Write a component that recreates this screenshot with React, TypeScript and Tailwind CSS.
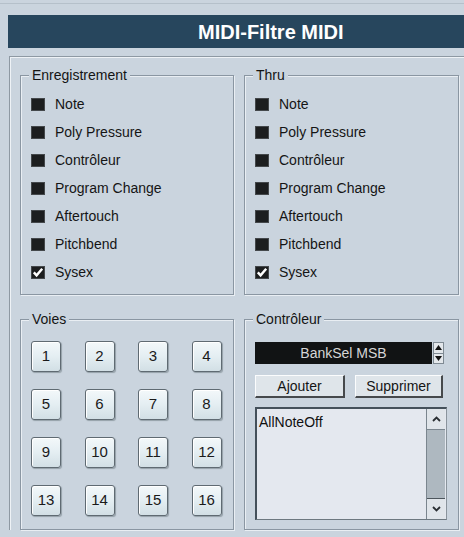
import React from "react";

const FONT = "font-['Liberation_Sans',Arial,sans-serif]";

function GroupBox({
  label,
  className,
  children,
}: {
  label: string;
  className: string;
  children: React.ReactNode;
}) {
  return (
    <div
      className={`relative border border-[#8a96a2] shadow-[inset_1px_1px_0_#e9eef3,1px_1px_0_#e9eef3] ${className}`}
    >
      <div className="absolute top-[-9px] left-[8px] px-[3px] bg-[#cad4de] text-[14px] leading-[16px] text-[#141414]">
        {label}
      </div>
      {children}
    </div>
  );
}

function Check({ label, checked }: { label: string; checked?: boolean }) {
  return (
    <div className="h-[28px] flex items-center">
      <div className="w-[14px] h-[13px] bg-[#1c1e1f] border border-[#44484b] flex items-center justify-center">
        {checked && (
          <svg width="12" height="11" viewBox="0 0 12 11">
            <polyline
              points="1.8,5.4 4.6,8.4 10.2,1.8"
              fill="none"
              stroke="#ffffff"
              strokeWidth="2.4"
            />
          </svg>
        )}
      </div>
      <span className="ml-[10px] text-[14px] leading-[16px] text-[#151515]">
        {label}
      </span>
    </div>
  );
}

const items = [
  "Note",
  "Poly Pressure",
  "Contrôleur",
  "Program Change",
  "Aftertouch",
  "Pitchbend",
];

function CheckList() {
  return (
    <div className="pl-[10px] pt-[14px]">
      {items.map((t) => (
        <Check key={t} label={t} />
      ))}
      <Check label="Sysex" checked />
    </div>
  );
}

function Chan({ n }: { n: number }) {
  return (
    <div className="w-[30px] h-[31px] rounded-[3px] border border-[#5f6a72] bg-linear-to-b from-[#f3f8fa] via-[#e4eef2] to-[#d2dfe5] shadow-[inset_1px_1px_0_#ffffff,1px_1px_1px_#94a0a8] flex items-center justify-center text-[15px] text-[#1a1a1a]">
      {n}
    </div>
  );
}

function Btn3D({ w, label }: { w: string; label: string }) {
  return (
    <div
      className={`${w} h-[23px] bg-[#dfe5ea] border-t border-l border-t-[#fbfcfd] border-l-[#fbfcfd] border-r-2 border-b-2 border-r-[#46494c] border-b-[#46494c] flex items-center justify-center text-[14px] text-[#151515]`}
    >
      {label}
    </div>
  );
}

export default function App() {
  return (
    <div
      className={`w-[464px] h-[537px] overflow-hidden bg-[#cad4de] ${FONT} text-[#141414]`}
    >
      <div className="h-[15px] pt-[3px]">
        <div className="border-t border-[#b5c0ca]" />
      </div>
      <div className="ml-[8px] h-[33px] bg-[#27465d] flex items-center pl-[190px] text-white font-bold text-[20px] leading-none">
        MIDI-Filtre MIDI
      </div>
      <div className="ml-[9px] mt-[8px] border-l border-t border-[#8e99a3] shadow-[inset_1px_1px_0_#eef2f6] pl-[10px] pt-[18px]">
        <div className="grid grid-cols-[214px_215px] gap-x-[10px] gap-y-[24px]">
          <GroupBox label="Enregistrement" className="h-[220px]">
            <CheckList />
          </GroupBox>
          <GroupBox label="Thru" className="h-[220px]">
            <CheckList />
          </GroupBox>
          <GroupBox label="Voies" className="h-[211px]">
            <div className="pl-[10px] pt-[21px] grid grid-cols-[30px_30px_30px_30px] gap-x-[23.5px] gap-y-[17px]">
              {Array.from({ length: 16 }, (_, i) => (
                <Chan key={i} n={i + 1} />
              ))}
            </div>
          </GroupBox>
          <GroupBox label="Contrôleur" className="h-[211px]">
            <div className="pl-[10px] pt-[22px]">
              <div className="flex h-[22px]">
                <div className="w-[177px] bg-[#111314] flex items-center justify-center text-[14px] text-[#d6d6d6]">
                  BankSel MSB
                </div>
                <div className="ml-[1px] w-[11px] flex flex-col bg-[#e3e7eb] border border-[#7f8a93]">
                  <div className="flex-1 flex items-center justify-center border-b border-[#7f8a93]">
                    <svg width="7" height="5" viewBox="0 0 7 5">
                      <polygon points="0,5 3.5,0 7,5" fill="#111" />
                    </svg>
                  </div>
                  <div className="flex-1 flex items-center justify-center">
                    <svg width="7" height="5" viewBox="0 0 7 5">
                      <polygon points="0,0 3.5,5 7,0" fill="#111" />
                    </svg>
                  </div>
                </div>
              </div>
              <div className="mt-[11px] flex gap-[10px]">
                <Btn3D w="w-[90px]" label="Ajouter" />
                <Btn3D w="w-[88px]" label="Supprimer" />
              </div>
              <div className="mt-[9px] w-[192px] h-[113px] flex border-t-2 border-l-2 border-t-[#44505a] border-l-[#44505a] border-r border-b border-r-[#8a949c] border-b-[#6d7880] bg-[#e4e8ef]">
                <div className="flex-1 pl-[2px] pt-[5px] text-[14px] leading-[16px] text-[#111]">
                  AllNoteOff
                </div>
                <div className="w-[19px] flex flex-col border-l border-[#7a858e] mr-[1px]">
                  <div className="h-[21px] bg-[#e0e5ea] border-b border-[#7a858e] flex items-center justify-center">
                    <svg width="9" height="6" viewBox="0 0 9 6">
                      <polyline
                        points="1,5 4.5,1.5 8,5"
                        fill="none"
                        stroke="#2a2f33"
                        strokeWidth="1.8"
                      />
                    </svg>
                  </div>
                  <div className="flex-1 bg-[#aeb8c0]" />
                  <div className="h-[21px] bg-[#e0e5ea] border-t border-[#4d565d] flex items-center justify-center">
                    <svg width="9" height="6" viewBox="0 0 9 6">
                      <polyline
                        points="1,1 4.5,4.5 8,1"
                        fill="none"
                        stroke="#2a2f33"
                        strokeWidth="1.8"
                      />
                    </svg>
                  </div>
                </div>
              </div>
            </div>
          </GroupBox>
        </div>
      </div>
    </div>
  );
}
